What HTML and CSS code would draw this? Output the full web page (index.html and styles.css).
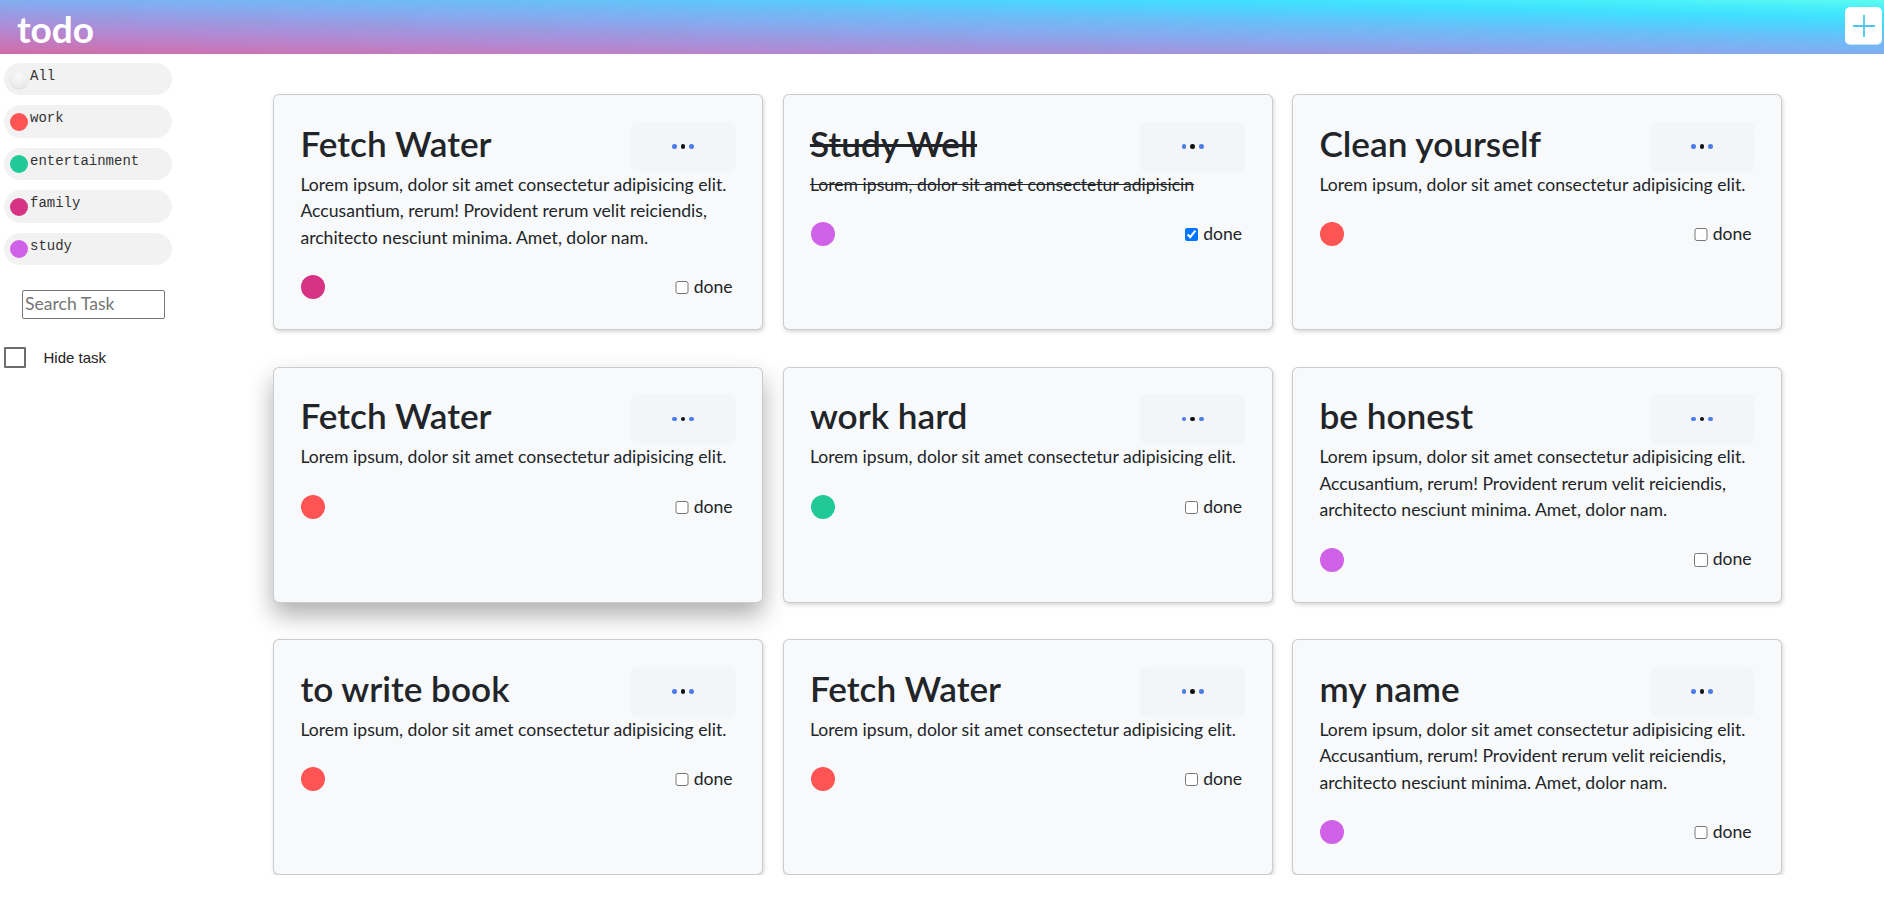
FILE: index.html
```html
<!DOCTYPE html>
<html lang="en">
<head>
<meta charset="utf-8">
<title>todo</title>
<link rel="stylesheet" href="styles.css">
</head>
<body>
<header class="topbar">
  <h1 class="logo">todo</h1>
  <button class="add-btn" aria-label="Add task">
    <svg width="22" height="22" viewBox="0 0 22 22"><path d="M11 0V22M0 11H22" stroke="#4ec8f3" stroke-width="1.8" fill="none"/></svg>
  </button>
</header>
<div class="layout">
  <aside class="sidebar">
    <ul class="filters">
      <li class="pill"><span class="tag tag-all"></span><span class="pill-label">All</span></li>
      <li class="pill"><span class="tag tag-work"></span><span class="pill-label">work</span></li>
      <li class="pill"><span class="tag tag-ent"></span><span class="pill-label">entertainment</span></li>
      <li class="pill"><span class="tag tag-family"></span><span class="pill-label">family</span></li>
      <li class="pill"><span class="tag tag-study"></span><span class="pill-label">study</span></li>
    </ul>
    <input class="search" type="text" placeholder="Search Task">
    <label class="hide-row"><input class="hide-box" type="checkbox"><span>Hide task</span></label>
  </aside>
  <main class="grid">
    <article class="card">
      <div class="card-head"><h2 class="card-title">Fetch Water</h2><button class="menu"><i class="d b"></i><i class="d k"></i><i class="d b"></i></button></div>
      <p class="card-text">Lorem ipsum, dolor sit amet consectetur adipisicing elit. Accusantium, rerum! Provident rerum velit reiciendis, architecto nesciunt minima. Amet, dolor nam.</p>
      <div class="card-foot"><span class="dot tag-family"></span><label class="done"><input type="checkbox">done</label></div>
    </article>
    <article class="card is-done">
      <div class="card-head"><h2 class="card-title">Study Well</h2><button class="menu"><i class="d b"></i><i class="d k"></i><i class="d b"></i></button></div>
      <p class="card-text">Lorem ipsum, dolor sit amet consectetur adipisicin</p>
      <div class="card-foot"><span class="dot tag-study"></span><label class="done"><input type="checkbox" checked>done</label></div>
    </article>
    <article class="card">
      <div class="card-head"><h2 class="card-title">Clean yourself</h2><button class="menu"><i class="d b"></i><i class="d k"></i><i class="d b"></i></button></div>
      <p class="card-text">Lorem ipsum, dolor sit amet consectetur adipisicing elit.</p>
      <div class="card-foot"><span class="dot tag-work"></span><label class="done"><input type="checkbox">done</label></div>
    </article>
    <article class="card is-hover">
      <div class="card-head"><h2 class="card-title">Fetch Water</h2><button class="menu"><i class="d b"></i><i class="d k"></i><i class="d b"></i></button></div>
      <p class="card-text">Lorem ipsum, dolor sit amet consectetur adipisicing elit.</p>
      <div class="card-foot"><span class="dot tag-work"></span><label class="done"><input type="checkbox">done</label></div>
    </article>
    <article class="card">
      <div class="card-head"><h2 class="card-title">work hard</h2><button class="menu"><i class="d b"></i><i class="d k"></i><i class="d b"></i></button></div>
      <p class="card-text">Lorem ipsum, dolor sit amet consectetur adipisicing elit.</p>
      <div class="card-foot"><span class="dot tag-ent"></span><label class="done"><input type="checkbox">done</label></div>
    </article>
    <article class="card">
      <div class="card-head"><h2 class="card-title">be honest</h2><button class="menu"><i class="d b"></i><i class="d k"></i><i class="d b"></i></button></div>
      <p class="card-text">Lorem ipsum, dolor sit amet consectetur adipisicing elit. Accusantium, rerum! Provident rerum velit reiciendis, architecto nesciunt minima. Amet, dolor nam.</p>
      <div class="card-foot"><span class="dot tag-study"></span><label class="done"><input type="checkbox">done</label></div>
    </article>
    <article class="card">
      <div class="card-head"><h2 class="card-title">to write book</h2><button class="menu"><i class="d b"></i><i class="d k"></i><i class="d b"></i></button></div>
      <p class="card-text">Lorem ipsum, dolor sit amet consectetur adipisicing elit.</p>
      <div class="card-foot"><span class="dot tag-work"></span><label class="done"><input type="checkbox">done</label></div>
    </article>
    <article class="card">
      <div class="card-head"><h2 class="card-title">Fetch Water</h2><button class="menu"><i class="d b"></i><i class="d k"></i><i class="d b"></i></button></div>
      <p class="card-text">Lorem ipsum, dolor sit amet consectetur adipisicing elit.</p>
      <div class="card-foot"><span class="dot tag-work"></span><label class="done"><input type="checkbox">done</label></div>
    </article>
    <article class="card">
      <div class="card-head"><h2 class="card-title">my name</h2><button class="menu"><i class="d b"></i><i class="d k"></i><i class="d b"></i></button></div>
      <p class="card-text">Lorem ipsum, dolor sit amet consectetur adipisicing elit. Accusantium, rerum! Provident rerum velit reiciendis, architecto nesciunt minima. Amet, dolor nam.</p>
      <div class="card-foot"><span class="dot tag-study"></span><label class="done"><input type="checkbox">done</label></div>
    </article>
  </main>
</div>
</body>
</html>
```
FILE: styles.css
```css
* { box-sizing: border-box; }
html, body { margin: 0; padding: 0; }
body {
  font-family: Lato, "Liberation Sans", sans-serif;
  font-size: 17.6px;
  line-height: 26.4px;
  color: #212529;
  background: #fff;
}

/* header */
.topbar {
  height: 54px;
  display: flex;
  justify-content: space-between;
  align-items: flex-start;
  background: linear-gradient(to top right, #d16ba5, #c777b9, #ba83ca, #aa8fd8, #9a9ae1, #8aa7ec, #79b3f4, #69bff8, #52cffe, #41dfff, #46eefa, #5ffbf1);
}
.logo {
  margin: 7px 0 0 17px;
  font-family: Lato, sans-serif;
  font-weight: 700;
  font-size: 37px;
  line-height: 44px;
  color: #fff;
}
.add-btn {
  margin: 7px 2px 0 0;
  width: 37px;
  height: 37px;
  padding: 0;
  border: 0;
  border-radius: 5px;
  background: #fff;
  display: flex;
  align-items: center;
  justify-content: center;
  box-shadow: 0 1px 0 rgba(255,255,255,.6);
}

/* layout */
.layout { display: flex; align-items: flex-start; }
.sidebar {
  flex: 0 0 273px;
  padding-top: 9px;
}
.filters {
  list-style: none;
  margin: 0;
  padding: 0;
  display: flex;
  flex-direction: column;
  gap: 10.1px;
}
.pill {
  display: flex;
  align-items: flex-start;
  width: 168px;
  height: 32.4px;
  margin-left: 4px;
  padding: 5px 0 0 6px;
  border-radius: 17px;
  background: #f2f2f2;
}
.tag {
  flex: none;
  width: 18px;
  height: 18px;
  border-radius: 50%;
  margin-top: 2.4px;
}
.pill-label {
  margin-left: 2px;
  font-family: "Liberation Mono", "DejaVu Sans Mono", monospace;
  font-size: 14px;
  line-height: 16px;
  color: #333;
}
.tag-all {
  background: radial-gradient(circle at 50% 35%, #fafafa, #e4e4e4);
  box-shadow: 0 1px 2px rgba(0,0,0,.12);
}
.tag-work { background: #fd5454; }
.tag-ent { background: #20c997; }
.tag-family { background: #d63384; }
.tag-study { background: #d062e8; }

.search {
  display: block;
  margin: 24.6px 0 0 22px;
  width: 142.5px;
  height: 29px;
  padding: 0 2px 1px;
  border: 1px solid #767676;
  border-radius: 2px;
  font-family: Lato, sans-serif;
  font-size: 17.6px;
  color: #212529;
  background: #fff;
}
.search::placeholder { color: #757575; }

.hide-row {
  display: flex;
  align-items: center;
  margin: 27.7px 0 0 4px;
  font-family: "Liberation Sans", Arial, sans-serif;
  font-size: 15px;
  line-height: 22px;
  color: #222;
}
.hide-box {
  appearance: none;
  -webkit-appearance: none;
  width: 22px;
  height: 21.5px;
  margin: 0 17.5px 0 0;
  border: 2px solid #6d6d6d;
  border-radius: 1px;
  background: #fff;
}

/* grid */
.grid {
  flex: none;
  display: grid;
  grid-template-columns: repeat(3, 490px);
  grid-auto-rows: 236px;
  column-gap: 19.5px;
  row-gap: 36.5px;
  padding-top: 40.3px;
}
.card {
  background: #f8f9fa;
  border: 1px solid rgba(0,0,0,.18);
  border-radius: 6px;
  padding: 26.4px;
  box-shadow: 1px 2px 4px rgba(0,0,0,.16);
}
.card.is-hover {
  box-shadow: 0 12px 24px rgba(0,0,0,.32);
}
.card-head {
  display: flex;
  justify-content: space-between;
  align-items: flex-start;
  height: 50px;
}
.card-title {
  margin: 0;
  font-family: Lato, sans-serif;
  font-weight: 600;
  font-size: 35.2px;
  line-height: 42.2px;
  color: #212529;
}
.menu {
  flex: none;
  width: 105px;
  height: 50px;
  padding: 0;
  border: 0;
  border-radius: 7px;
  background: #f3f5f9;
  display: flex;
  align-items: center;
  justify-content: center;
  gap: 4px;
}
.d {
  display: block;
  width: 4.6px;
  height: 4.6px;
  border-radius: 50%;
}
.d.b { background: #4a7ce9; }
.d.k { background: #111; }
.card-text {
  margin: 0;
  font-size: 17.6px;
  line-height: 26.4px;
}
.card-foot {
  display: flex;
  justify-content: space-between;
  align-items: center;
  margin-top: 23px;
  height: 26.4px;
}
.dot {
  width: 24px;
  height: 24px;
  border-radius: 50%;
  margin-left: 1px;
}
.done {
  display: flex;
  align-items: center;
  margin-right: 3px;
  font-size: 17.6px;
}
.done input {
  width: 13.4px;
  height: 13.4px;
  margin: 1px 5px 0 0;
}
.is-done .card-title,
.is-done .card-text { text-decoration: line-through; }
```
